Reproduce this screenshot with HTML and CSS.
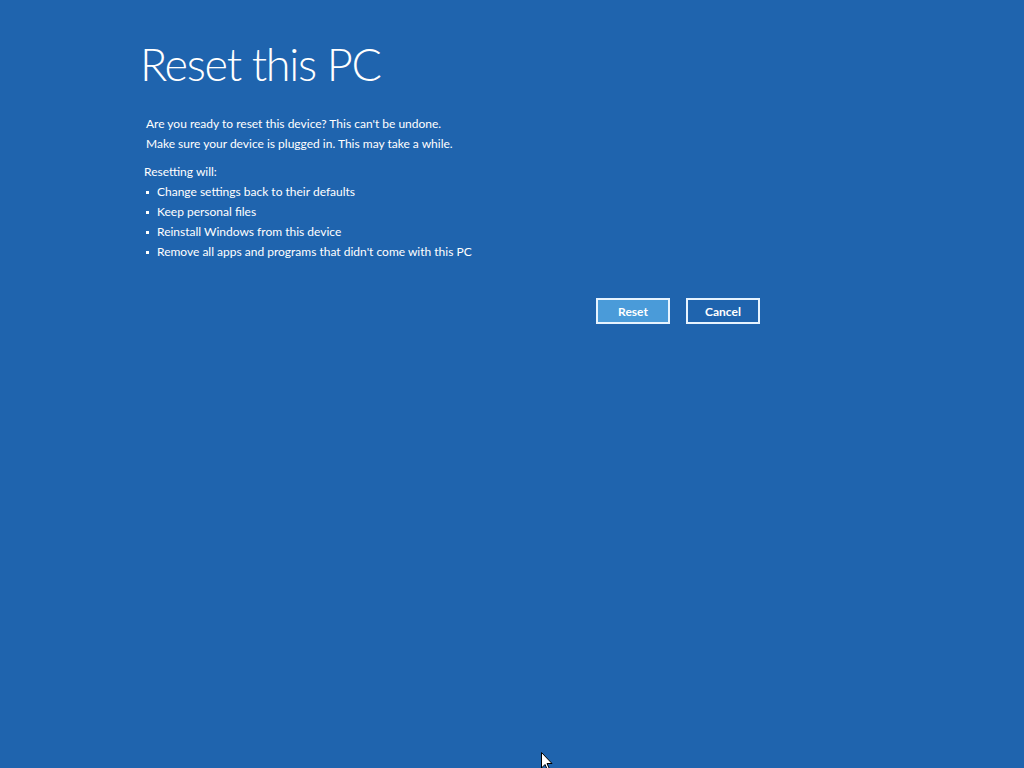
FILE: index.html
```html
<!DOCTYPE html>
<html lang="en">
<head>
    <meta charset="UTF-8">
    <meta name="viewport" content="width=device-width, initial-scale=1.0">
    <title>Reset this PC</title>
    <link rel="stylesheet" href="styles.css">
</head>
<body>
    <div class="page">
        <h1 class="title">Reset this PC</h1>
        <div class="intro">
            <p>Are you ready to reset this device? This can't be undone.</p>
            <p>Make sure your device is plugged in. This may take a while.</p>
        </div>
        <p class="lead">Resetting will:</p>
        <ul class="changes">
            <li>Change settings back to their defaults</li>
            <li>Keep personal files</li>
            <li>Reinstall Windows from this device</li>
            <li>Remove all apps and programs that didn't come with this PC</li>
        </ul>
        <div class="actions">
            <button class="btn primary">Reset</button>
            <button class="btn">Cancel</button>
        </div>
    </div>
    <svg class="cursor" width="12" height="19" viewBox="0 0 12 19">
        <path d="M0.5 0.5 L0.5 16 L4 12.5 L6.5 18 L8.5 17 L6 11.5 L11 11.5 Z" fill="#fff" stroke="#000" stroke-width="1"/>
    </svg>
</body>
</html>
```

FILE: styles.css
```css
html, body {
    height: 100%;
}

body {
    margin: 0;
    background-color: #1f64ae;
    color: #fff;
    font-family: Lato, "Noto Sans", sans-serif;
    overflow: hidden;
}

.page {
    width: 620px;
    padding: 34px 0 0 140px;
}

.title {
    margin: 0;
    font-weight: 300;
    font-size: 45px;
    line-height: 60px;
    letter-spacing: -1.3px;
}

.intro {
    margin: 20px 0 0 6px;
}

.intro p, .lead {
    margin: 0;
    font-size: 12px;
    line-height: 20px;
}

.lead {
    margin: 8px 0 0 4px;
}

.changes {
    list-style: none;
    margin: 0 0 0 5px;
    padding: 0;
    font-size: 12px;
    line-height: 20px;
}

.changes li {
    position: relative;
    padding-left: 12px;
}

.changes li::before {
    content: "";
    position: absolute;
    left: 1px;
    top: 9px;
    width: 3px;
    height: 3px;
    background: #fff;
}

.actions {
    display: flex;
    justify-content: flex-end;
    gap: 16px;
    margin-top: 36px;
}

.btn {
    width: 74px;
    height: 26px;
    border: 2px solid #e6f3ff;
    background: #1f64ae;
    color: #fff;
    font-family: Lato, "Noto Sans", sans-serif;
    font-size: 12px;
    font-weight: 700;
    padding: 0;
}

.btn.primary {
    background: #4a9bd9;
}

.cursor {
    position: absolute;
    left: 541px;
    top: 752px;
}
```
